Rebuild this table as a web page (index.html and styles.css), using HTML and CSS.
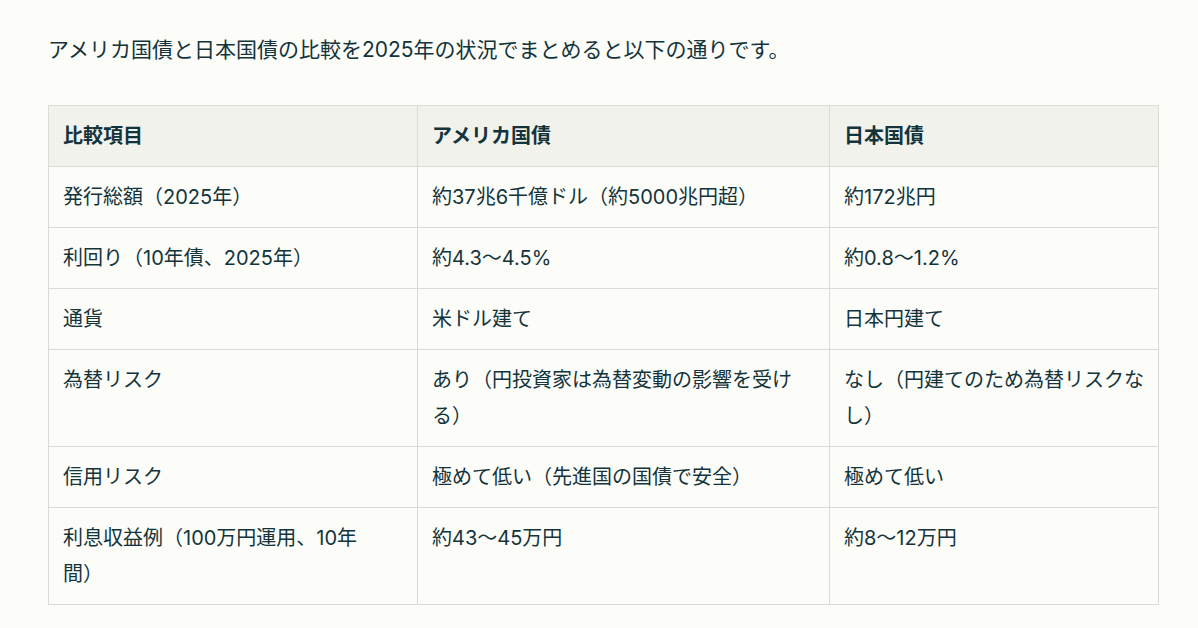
FILE: index.html
```html
<!DOCTYPE html>
<html lang="ja">
<head>
<meta charset="utf-8">
<title>アメリカ国債と日本国債の比較</title>
<link rel="stylesheet" href="styles.css">
</head>
<body>
<main class="page">
  <p class="lead">アメリカ国債と日本国債の比較を2025年の状況でまとめると以下の通りです。</p>
  <table class="compare">
    <colgroup>
      <col class="c1">
      <col class="c2">
      <col class="c3">
    </colgroup>
    <thead>
      <tr><th>比較項目</th><th>アメリカ国債</th><th>日本国債</th></tr>
    </thead>
    <tbody>
      <tr><td>発行総額（2025年）</td><td>約37兆6千億ドル（約5000兆円超）</td><td>約172兆円</td></tr>
      <tr><td>利回り（10年債、2025年）</td><td>約4.3〜4.5%</td><td>約0.8〜1.2%</td></tr>
      <tr><td>通貨</td><td>米ドル建て</td><td>日本円建て</td></tr>
      <tr><td>為替リスク</td><td>あり（円投資家は為替変動の影響を受ける）</td><td>なし（円建てのため為替リスクなし）</td></tr>
      <tr><td>信用リスク</td><td>極めて低い（先進国の国債で安全）</td><td>極めて低い</td></tr>
      <tr><td>利息収益例（100万円運用、10年間）</td><td>約43〜45万円</td><td>約8〜12万円</td></tr>
    </tbody>
  </table>
</main>
</body>
</html>
```

FILE: styles.css
```css
html, body {
  margin: 0;
  padding: 0;
  background: #fcfcf9;
}

body {
  font-family: "Inter", "Noto Sans CJK JP", sans-serif;
  color: #13343b;
  font-size: 20px;
  line-height: 36px;
}

.page {
  padding: 32px 0 0 48px;
  width: 1110px;
}

.lead {
  margin: 0 0 37px 0;
  font-size: 21px;
  line-height: 36px;
}

.compare {
  width: 1110px;
  table-layout: fixed;
  border-collapse: collapse;
  font-size: 20px;
}

.c1 { width: 369px; }
.c2 { width: 412px; }
.c3 { width: 329px; }

.compare th,
.compare td {
  border: 1px solid #dadad6;
  padding: 12px 14px;
  text-align: left;
  vertical-align: top;
  line-height: 36px;
}

.compare td:first-child {
  padding-right: 32px;
}

.compare th {
  font-weight: 700;
  background-color: #f3f3ee;
  background-image: radial-gradient(rgba(0, 0, 0, 0.035) 0.6px, transparent 0.8px);
  background-size: 3px 3px;
}

.compare td {
  background: #fcfcf9;
}
```
